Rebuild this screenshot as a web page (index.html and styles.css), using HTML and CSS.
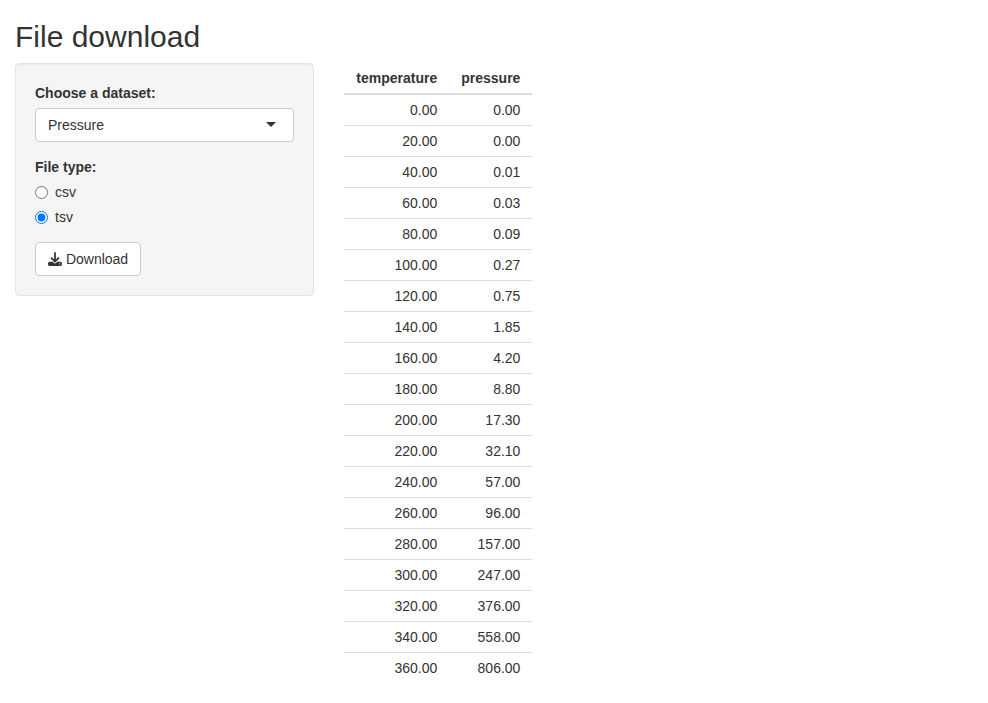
FILE: index.html
```html
<!DOCTYPE html>
<html lang="en">
<head>
<meta charset="utf-8">
<title>File download</title>
<link rel="stylesheet" href="styles.css">
</head>
<body>
<div class="container">
  <h2 class="title">File download</h2>
  <div class="row">
    <div class="sidebar">
      <form class="well">
        <div class="field">
          <label class="label" for="dataset">Choose a dataset:</label>
          <div class="select-wrap">
            <select class="select" id="dataset">
              <option>Rock</option>
              <option selected>Pressure</option>
              <option>Cars</option>
            </select>
          </div>
        </div>
        <div class="field" role="radiogroup" aria-labelledby="filetype-label">
          <span class="label" id="filetype-label">File type:</span>
          <label class="radio"><input type="radio" name="filetype" value="csv"><span>csv</span></label>
          <label class="radio"><input type="radio" name="filetype" value="tsv" checked><span>tsv</span></label>
        </div>
        <button class="btn" type="button"><svg class="icon" viewBox="0 0 512 512" aria-hidden="true"><path fill="currentColor" d="M288 32c0-17.700-14.300-32-32-32s-32 14.300-32 32V274.700l-73.400-73.400c-12.500-12.500-32.800-12.500-45.300 0s-12.500 32.800 0 45.300l128 128c12.500 12.500 32.800 12.500 45.300 0l128-128c12.500-12.500 12.500-32.800 0-45.300s-32.800-12.500-45.300 0L288 274.700V32zM64 352c-35.300 0-64 28.700-64 64v32c0 35.300 28.700 64 64 64H448c35.300 0 64-28.700 64-64V416c0-35.300-28.700-64-64-64H346.500l-45.300 45.300c-25 25-65.500 25-90.500 0L165.500 352H64zm368 56a24 24 0 1 1 0 48 24 24 0 1 1 0-48z"/></svg> Download</button>
      </form>
    </div>
    <div class="main">
      <table class="table">
        <thead><tr><th>temperature</th><th>pressure</th></tr></thead>
        <tbody>
          <tr><td>0.00</td><td>0.00</td></tr>
          <tr><td>20.00</td><td>0.00</td></tr>
          <tr><td>40.00</td><td>0.01</td></tr>
          <tr><td>60.00</td><td>0.03</td></tr>
          <tr><td>80.00</td><td>0.09</td></tr>
          <tr><td>100.00</td><td>0.27</td></tr>
          <tr><td>120.00</td><td>0.75</td></tr>
          <tr><td>140.00</td><td>1.85</td></tr>
          <tr><td>160.00</td><td>4.20</td></tr>
          <tr><td>180.00</td><td>8.80</td></tr>
          <tr><td>200.00</td><td>17.30</td></tr>
          <tr><td>220.00</td><td>32.10</td></tr>
          <tr><td>240.00</td><td>57.00</td></tr>
          <tr><td>260.00</td><td>96.00</td></tr>
          <tr><td>280.00</td><td>157.00</td></tr>
          <tr><td>300.00</td><td>247.00</td></tr>
          <tr><td>320.00</td><td>376.00</td></tr>
          <tr><td>340.00</td><td>558.00</td></tr>
          <tr><td>360.00</td><td>806.00</td></tr>
        </tbody>
      </table>
    </div>
  </div>
</div>
</body>
</html>
```
FILE: styles.css
```css
* { box-sizing: border-box; }

body {
  margin: 0;
  font-family: "Liberation Sans", Arial, sans-serif;
  font-size: 14px;
  line-height: 20px;
  color: #333;
  background: #fff;
}

.container { padding: 0 15px; }

.title {
  margin: 20px 0 10px;
  font-size: 30px;
  font-weight: 500;
  line-height: 33px;
}

.row {
  display: grid;
  grid-template-columns: 4fr 8fr;
  margin: 0 -15px;
}

.sidebar, .main { padding: 0 15px; }

.well {
  padding: 19px;
  background: #f5f5f5;
  border: 1px solid #e3e3e3;
  border-radius: 4px;
  box-shadow: inset 0 1px 1px rgba(0, 0, 0, 0.05);
}

.field { margin-bottom: 15px; }

.label {
  display: block;
  margin-bottom: 5px;
  font-weight: 700;
}

.select-wrap { position: relative; }

.select-wrap::after {
  content: "";
  position: absolute;
  top: 14px;
  right: 18px;
  border: 5px solid transparent;
  border-top-color: #333;
  border-bottom: 0;
  pointer-events: none;
}

.select {
  display: block;
  width: 100%;
  height: 34px;
  padding: 0 32px 0 12px;
  font: inherit;
  color: #333;
  background: #fff;
  border: 1px solid #ccc;
  border-radius: 4px;
  appearance: none;
}

.radio {
  display: flex;
  align-items: center;
  gap: 7px;
  margin-bottom: 5px;
}

.radio input {
  width: 13px;
  height: 13px;
  margin: 0;
}

.btn {
  display: inline-block;
  padding: 6px 12px;
  font: inherit;
  color: #333;
  background: #fff;
  border: 1px solid #ccc;
  border-radius: 4px;
}

.icon {
  width: 14px;
  height: 14px;
  vertical-align: -2px;
}

.table {
  border-collapse: collapse;
  text-align: right;
}

.table th {
  padding: 5px 12px;
  border-bottom: 2px solid #ddd;
}

.table td {
  padding: 5px 12px;
  border-top: 1px solid #ddd;
}
```
